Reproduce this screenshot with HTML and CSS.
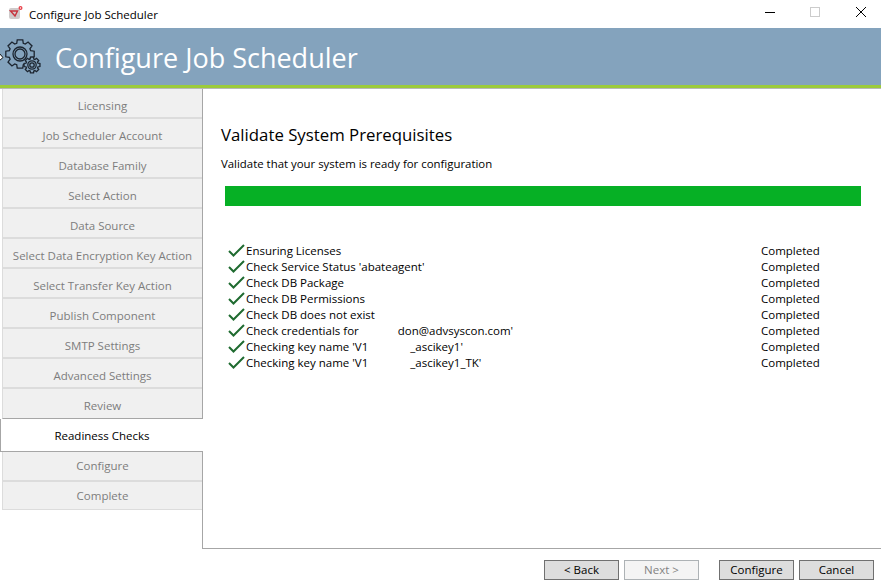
FILE: index.html
```
<!DOCTYPE html>
<html lang="en">
<head>
<meta charset="utf-8">
<title>Configure Job Scheduler</title>
<link rel="stylesheet" href="styles.css">
</head>
<body>
<div class="titlebar">
  <svg class="app-icon" width="16" height="16" viewBox="0 0 16 16"><rect x="1" y="2" width="11" height="11" rx="2" fill="#cfcaca"/><path d="M2.500 5h7l-2.500 5z" fill="none" stroke="#c8323c" stroke-width="1.4"/><circle cx="12.500" cy="2" r="2" fill="#e8404a"/><circle cx="12.500" cy="2" r=".7" fill="#fff"/></svg>
  <span class="titlebar-text">Configure Job Scheduler</span>
  <div class="winbtns">
    <svg width="10" height="10" viewBox="0 0 10 10"><path d="M0 5.500h10" stroke="#000"/></svg>
    <svg width="10" height="10" viewBox="0 0 10 10"><rect x=".5" y=".5" width="9" height="9" fill="none" stroke="#ccc"/></svg>
    <svg width="10" height="10" viewBox="0 0 10 10"><path d="M0 0l10 10M10 0L0 10" stroke="#000"/></svg>
  </div>
</div>
<header class="banner">
  <svg class="gears" width="42" height="38" viewBox="0 0 42 38" fill="none" stroke="#1c2530" stroke-width="1.3">
    <defs><path id="gear" vector-effect="non-scaling-stroke" d="M-3.270-10.700L-2.770-14.200L2.770-14.200L3.270-10.700L5.250-9.880L8.080-12L12-8.080L9.880-5.250L10.700-3.270L14.200-2.770L14.200 2.770L10.700 3.270L9.880 5.250L12 8.080L8.080 12L5.250 9.880L3.270 10.700L2.770 14.200L-2.770 14.200L-3.270 10.700L-5.250 9.880L-8.080 12L-12 8.080L-9.880 5.250L-10.700 3.270L-14.200 2.770L-14.200-2.770L-10.700-3.270L-9.880-5.250L-12-8.080L-8.080-12L-5.250-9.880Z"/></defs>
    <use href="#gear" transform="translate(20 16)"/>
    <circle cx="20" cy="16" r="7"/><circle cx="20" cy="16" r="5"/>
    <use href="#gear" transform="translate(32 27) scale(.56)" fill="#84a3bd"/>
    <circle cx="32" cy="27" r="4.200"/><circle cx="32" cy="27" r="2.200"/>
    <path d="M-1 15L3 19.500L-1 23Z" fill="#fff" stroke="#111" stroke-width="1"/>
  </svg>
  <h1 class="banner-title">Configure Job Scheduler</h1>
</header>
<div class="accent"></div>
<div class="content">
  <nav class="steps">
    <div class="step">Licensing</div>
    <div class="step">Job Scheduler Account</div>
    <div class="step">Database Family</div>
    <div class="step">Select Action</div>
    <div class="step">Data Source</div>
    <div class="step">Select Data Encryption Key Action</div>
    <div class="step">Select Transfer Key Action</div>
    <div class="step">Publish Component</div>
    <div class="step">SMTP Settings</div>
    <div class="step">Advanced Settings</div>
    <div class="step step-last">Review</div>
    <div class="step-active">Readiness Checks</div>
    <div class="step step-after">Configure</div>
    <div class="step step-end">Complete</div>
  </nav>
  <main class="panel">
    <h2 class="panel-title">Validate System Prerequisites</h2>
    <p class="panel-sub">Validate that your system is ready for configuration</p>
    <div class="progress"></div>
    <ul class="checks">
      <li class="check"><svg class="tick" width="17" height="13" viewBox="0 0 17 13"><path d="M1 7l4.500 4.500L16 1" fill="none" stroke="#1f6b30" stroke-width="2"/></svg><span class="check-name">Ensuring Licenses</span><span class="check-status">Completed</span></li>
      <li class="check"><svg class="tick" width="17" height="13" viewBox="0 0 17 13"><path d="M1 7l4.500 4.500L16 1" fill="none" stroke="#1f6b30" stroke-width="2"/></svg><span class="check-name">Check Service Status 'abateagent'</span><span class="check-status">Completed</span></li>
      <li class="check"><svg class="tick" width="17" height="13" viewBox="0 0 17 13"><path d="M1 7l4.500 4.500L16 1" fill="none" stroke="#1f6b30" stroke-width="2"/></svg><span class="check-name">Check DB Package</span><span class="check-status">Completed</span></li>
      <li class="check"><svg class="tick" width="17" height="13" viewBox="0 0 17 13"><path d="M1 7l4.500 4.500L16 1" fill="none" stroke="#1f6b30" stroke-width="2"/></svg><span class="check-name">Check DB Permissions</span><span class="check-status">Completed</span></li>
      <li class="check"><svg class="tick" width="17" height="13" viewBox="0 0 17 13"><path d="M1 7l4.500 4.500L16 1" fill="none" stroke="#1f6b30" stroke-width="2"/></svg><span class="check-name">Check DB does not exist</span><span class="check-status">Completed</span></li>
      <li class="check"><svg class="tick" width="17" height="13" viewBox="0 0 17 13"><path d="M1 7l4.500 4.500L16 1" fill="none" stroke="#1f6b30" stroke-width="2"/></svg><span class="check-name">Check credentials for<span class="gap"></span>don@advsyscon.com'</span><span class="check-status">Completed</span></li>
      <li class="check"><svg class="tick" width="17" height="13" viewBox="0 0 17 13"><path d="M1 7l4.500 4.500L16 1" fill="none" stroke="#1f6b30" stroke-width="2"/></svg><span class="check-name">Checking key name 'V1<span class="gap gap-key"></span>_ascikey1'</span><span class="check-status">Completed</span></li>
      <li class="check"><svg class="tick" width="17" height="13" viewBox="0 0 17 13"><path d="M1 7l4.500 4.500L16 1" fill="none" stroke="#1f6b30" stroke-width="2"/></svg><span class="check-name">Checking key name 'V1<span class="gap gap-key"></span>_ascikey1_TK'</span><span class="check-status">Completed</span></li>
    </ul>
  </main>
</div>
<footer class="footer">
  <button class="btn">&lt; Back</button>
  <button class="btn btn-disabled">Next &gt;</button>
  <button class="btn btn-configure">Configure</button>
  <button class="btn">Cancel</button>
</footer>
</body>
</html>
```
FILE: styles.css
```
* { box-sizing: border-box; }
html, body { margin: 0; padding: 0; height: 100%; }
body {
  width: 881px; height: 588px; overflow: hidden; background: #fff; color: #000;
  font-family: "Open Sans", "Liberation Sans", sans-serif; font-size: 11.5px;
  display: flex; flex-direction: column;
}
.titlebar { height: 28px; flex: none; display: flex; align-items: center; padding-left: 8px; }
.app-icon { flex: none; }
.titlebar-text { margin-left: 5px; }
.winbtns { margin: -4px 0 0 auto; display: flex; gap: 35px; padding-right: 15px; }
.winbtns svg:last-child { margin-left: 1px; }
.banner { height: 57px; flex: none; background: #84a3bd; display: flex; align-items: center; }
.gears { flex: none; margin-top: 1px; }
.banner-title { margin: 2px 0 0 13px; font-size: 27px; font-weight: 400; color: #fff; }
.accent { height: 4px; flex: none; background: #9ccb3b; border-bottom: 1px solid #b9b9b9; }
.content { height: 460px; flex: none; display: flex; }
.steps { width: 203px; flex: none; display: flex; flex-direction: column; border-right: 1px solid #a6a6a6; }
.step {
  height: 30px; margin-left: 2px; padding-top: 4px; background: #f0f0f0; color: #7d7d7d;
  border-left: 1px solid #dcdcdc; border-bottom: 2px solid #dcdcdc;
  display: flex; align-items: center; justify-content: center;
}
.step-last { border-bottom: 1px solid #a6a6a6; }
.step-active {
  height: 33px; margin-right: -1px; background: #fff;
  border-bottom: 1px solid #a6a6a6; border-left: 1px solid #a6a6a6;
  display: flex; align-items: center; justify-content: center;
}
.step-after { padding: 0 0 2px; }
.step-end { height: 28px; padding-top: 0; border-bottom: 1px solid #dcdcdc; }
.panel { flex: 1; border-bottom: 1px solid #a6a6a6; padding: 33px 20px 0 18px; }
.panel-title { margin: 0; font-size: 16.8px; font-weight: 400; line-height: 25px; }
.panel-sub { margin: 9px 0 0; font-size: 11.4px; line-height: 16px; }
.progress { height: 20px; margin: 14px 0 0 4px; background: #06b025; }
.checks { list-style: none; margin: 36px 0 0; padding: 0 0 0 7px; }
.check { height: 16px; display: flex; align-items: center; }
.tick { flex: none; margin-right: 1px; }
.check-status { margin-left: auto; width: 100px; }
.gap { display: inline-block; width: 39px; }
.gap-key { width: 42px; }
.footer { flex: 1; display: flex; align-items: flex-start; padding: 11px 0 0 544px; }
.btn {
  width: 75px; height: 20px; flex: none; padding: 0 0 2px; font: inherit; color: #000;
  background: #dddddd; border: 1px solid #707070; margin-right: 5px;
}
.btn-disabled { background: #f4f4f4; border-color: #adb2b5; color: #838383; }
.btn-configure { margin-left: 15px; }
```
